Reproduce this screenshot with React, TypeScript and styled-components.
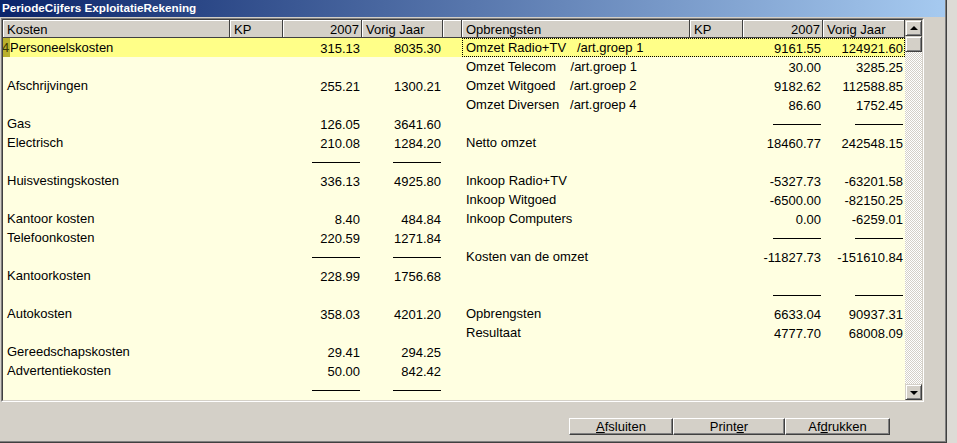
import React from 'react';
import styled, { createGlobalStyle } from 'styled-components';

type Entry = {
  label?: string;
  cur?: string;
  prev?: string;
  rule?: boolean;
};

const LEFT_COLS = '227px 53px 79px 81px';
const RIGHT_COLS = '228px 53px 80px 82px';

const kosten: Entry[] = [
  { label: 'Personeelskosten', cur: '315.13', prev: '8035.30' },
  {},
  { label: 'Afschrijvingen', cur: '255.21', prev: '1300.21' },
  {},
  { label: 'Gas', cur: '126.05', prev: '3641.60' },
  { label: 'Electrisch', cur: '210.08', prev: '1284.20' },
  { rule: true },
  { label: 'Huisvestingskosten', cur: '336.13', prev: '4925.80' },
  {},
  { label: 'Kantoor kosten', cur: '8.40', prev: '484.84' },
  { label: 'Telefoonkosten', cur: '220.59', prev: '1271.84' },
  { rule: true },
  { label: 'Kantoorkosten', cur: '228.99', prev: '1756.68' },
  {},
  { label: 'Autokosten', cur: '358.03', prev: '4201.20' },
  {},
  { label: 'Gereedschapskosten', cur: '29.41', prev: '294.25' },
  { label: 'Advertentiekosten', cur: '50.00', prev: '842.42' },
  { rule: true },
  {},
];

const opbrengsten: Entry[] = [
  { label: 'Omzet Radio+TV   /art.groep 1', cur: '9161.55', prev: '124921.60' },
  { label: 'Omzet Telecom    /art.groep 1', cur: '30.00', prev: '3285.25' },
  { label: 'Omzet Witgoed    /art.groep 2', cur: '9182.62', prev: '112588.85' },
  { label: 'Omzet Diversen   /art.groep 4', cur: '86.60', prev: '1752.45' },
  { rule: true },
  { label: 'Netto omzet', cur: '18460.77', prev: '242548.15' },
  {},
  { label: 'Inkoop Radio+TV', cur: '-5327.73', prev: '-63201.58' },
  { label: 'Inkoop Witgoed', cur: '-6500.00', prev: '-82150.25' },
  { label: 'Inkoop Computers', cur: '0.00', prev: '-6259.01' },
  { rule: true },
  { label: 'Kosten van de omzet', cur: '-11827.73', prev: '-151610.84' },
  {},
  { rule: true },
  { label: 'Opbrengsten', cur: '6633.04', prev: '90937.31' },
  { label: 'Resultaat', cur: '4777.70', prev: '68008.09' },
  {},
  {},
  {},
  {},
];

const GlobalStyle = createGlobalStyle`
  html, body {
    margin: 0;
    padding: 0;
    background: #dddbd6;
  }
  body {
    font-family: 'Liberation Sans', Arial, sans-serif;
    font-size: 13px;
    color: #000;
  }
  * {
    box-sizing: border-box;
  }
`;

const Window = styled.div`
  width: 947px;
  height: 443px;
  background: #d4d0c8;
  border-right: 1px solid #404040;
  border-bottom: 1px solid #404040;
  box-shadow: inset -1px -1px 0 #808080;
  display: flex;
  flex-direction: column;
  overflow: hidden;
`;

const TitleBar = styled.div`
  height: 17px;
  margin-right: 1px;
  padding-left: 2px;
  background: linear-gradient(to right, #0a246a, #a6caf0);
  color: #fff;
  font-family: 'Liberation Sans', Arial, sans-serif;
  font-weight: bold;
  font-size: 11.7px;
  line-height: 16px;
  white-space: nowrap;
`;

const GridFrame = styled.div`
  margin: 1px 0 0 1px;
  width: 923px;
  height: 384px;
  border-top: 1px solid #808080;
  border-left: 1px solid #808080;
  border-right: 1px solid #ffffff;
  border-bottom: 1px solid #ffffff;
`;

const GridInner = styled.div`
  height: 100%;
  display: flex;
  border-top: 1px solid #404040;
  border-left: 1px solid #404040;
  border-right: 1px solid #d4d0c8;
  border-bottom: 1px solid #d4d0c8;
`;

const Sheet = styled.div`
  width: 902px;
  background: #ffffe1;
  overflow: hidden;
  display: flex;
  flex-direction: column;
`;

const Row = styled.div<{ $selected?: boolean }>`
  display: flex;
  flex: none;
  height: 19px;
  background: ${({ $selected }) => ($selected ? '#ffff88' : 'transparent')};
`;

const HeaderRow = styled.div`
  display: flex;
  flex: none;
  height: 18px;
`;

const Half = styled.div<{ $cols: string; $focus?: boolean }>`
  display: grid;
  grid-template-columns: ${({ $cols }) => $cols};
  outline: ${({ $focus }) => ($focus ? '1px dotted #000' : 'none')};
  outline-offset: -1px;
`;

const Spacer = styled.div`
  width: 19px;
`;

const HeaderCell = styled.div<{ $align?: 'left' | 'right'; $width?: number }>`
  ${({ $width }) => ($width ? `width: ${$width}px;` : '')}
  height: 18px;
  background: #d4d0c8;
  border-right: 1px solid #404040;
  border-bottom: 1px solid #404040;
  box-shadow: inset 1px 1px 0 #ffffff;
  line-height: 17px;
  padding: 1px 2px 0 4px;
  text-align: ${({ $align }) => $align || 'left'};
  white-space: nowrap;
  overflow: hidden;
`;

const LabelCell = styled.div<{ $tight?: boolean }>`
  height: 19px;
  padding-top: 1px;
  padding-left: ${({ $tight }) => ($tight ? '0' : '4px')};
  line-height: 18px;
  white-space: pre;
  overflow: hidden;
  display: flex;
  align-items: center;
`;

const Marker = styled.span`
  display: inline-block;
  align-self: stretch;
  width: 7px;
  margin-top: -1px;
  background: #b9b12c;
  color: #3a3600;
  overflow: hidden;
  line-height: 20px;
  text-indent: -1px;
`;

const NumberCell = styled.div`
  height: 19px;
  display: flex;
  align-items: center;
  justify-content: flex-end;
  padding: 2px 2px 0 0;
  line-height: 17px;
  white-space: nowrap;
`;

const Rule = styled.div`
  width: 48px;
  height: 1px;
  background: #000;
`;

const Scrollbar = styled.div`
  width: 17px;
  display: flex;
  flex-direction: column;
`;

const ScrollButton = styled.div`
  flex: none;
  height: 16px;
  background: #d4d0c8;
  border-top: 1px solid #d4d0c8;
  border-left: 1px solid #d4d0c8;
  border-right: 1px solid #404040;
  border-bottom: 1px solid #404040;
  box-shadow: inset 1px 1px 0 #ffffff, inset -1px -1px 0 #808080;
  display: flex;
  align-items: center;
  justify-content: center;
`;

const Arrow = styled.span<{ $dir: 'up' | 'down' }>`
  width: 0;
  height: 0;
  border-left: 4px solid transparent;
  border-right: 4px solid transparent;
  ${({ $dir }) =>
    $dir === 'up'
      ? 'border-bottom: 4px solid #000; margin-top: -1px;'
      : 'border-top: 4px solid #000; margin-top: 1px;'}
`;

const Track = styled.div`
  flex: 1;
  background-color: #ffffff;
  background-image: repeating-conic-gradient(#d4d0c8 0 25%, #ffffff 0 50%);
  background-size: 2px 2px;
`;

const ButtonBar = styled.div`
  display: flex;
  justify-content: flex-end;
  padding: 16px 56px 0 0;
`;

const Button = styled.button<{ $width: number }>`
  width: ${({ $width }) => $width}px;
  height: 17px;
  padding: 0;
  background: #d4d0c8;
  border-top: 1px solid #ffffff;
  border-left: 1px solid #ffffff;
  border-right: 1px solid #404040;
  border-bottom: 1px solid #404040;
  box-shadow: inset -1px -1px 0 #808080;
  font-family: 'Liberation Sans', Arial, sans-serif;
  font-size: 13px;
  line-height: 14px;
  color: #000;
`;

const renderHalf = (entry: Entry, cols: string, withMarker: boolean, focus?: boolean) => (
  <Half $cols={cols} $focus={focus}>
    <LabelCell $tight={withMarker}>
      {withMarker && <Marker>4</Marker>}
      {entry.label}
    </LabelCell>
    <div />
    <NumberCell>{entry.rule ? <Rule /> : entry.cur}</NumberCell>
    <NumberCell>{entry.rule ? <Rule /> : entry.prev}</NumberCell>
  </Half>
);

const App: React.FC = () => {
  return (
    <>
      <GlobalStyle />
      <Window>
        <TitleBar>PeriodeCijfers ExploitatieRekening</TitleBar>
        <GridFrame>
          <GridInner>
            <Sheet>
              <HeaderRow>
                <Half $cols={LEFT_COLS}>
                  <HeaderCell>Kosten</HeaderCell>
                  <HeaderCell>KP</HeaderCell>
                  <HeaderCell $align="right">2007</HeaderCell>
                  <HeaderCell>Vorig Jaar</HeaderCell>
                </Half>
                <HeaderCell $width={19} />
                <Half $cols={RIGHT_COLS}>
                  <HeaderCell>Opbrengsten</HeaderCell>
                  <HeaderCell>KP</HeaderCell>
                  <HeaderCell $align="right">2007</HeaderCell>
                  <HeaderCell>Vorig Jaar</HeaderCell>
                </Half>
              </HeaderRow>
              {kosten.map((left, i) => (
                <Row key={i} $selected={i === 0}>
                  {renderHalf(left, LEFT_COLS, i === 0)}
                  <Spacer />
                  {renderHalf(opbrengsten[i], RIGHT_COLS, false, i === 0)}
                </Row>
              ))}
            </Sheet>
            <Scrollbar>
              <ScrollButton>
                <Arrow $dir="up" />
              </ScrollButton>
              <ScrollButton />
              <Track />
              <ScrollButton>
                <Arrow $dir="down" />
              </ScrollButton>
            </Scrollbar>
          </GridInner>
        </GridFrame>
        <ButtonBar>
          <Button $width={104}>
            <u>A</u>fsluiten
          </Button>
          <Button $width={112}>
            Print<u>e</u>r
          </Button>
          <Button $width={105}>
            Af<u>d</u>rukken
          </Button>
        </ButtonBar>
      </Window>
    </>
  );
};

export default App;
